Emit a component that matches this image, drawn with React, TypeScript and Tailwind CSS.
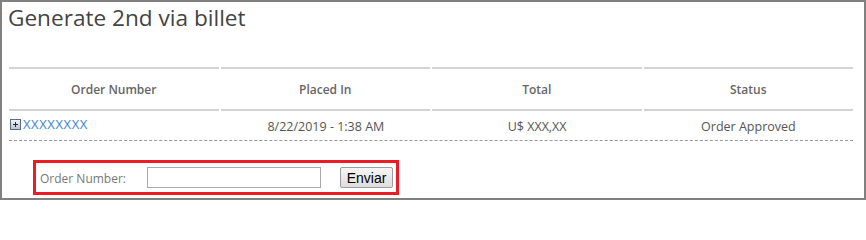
import React from "react";

const columns = ["Order Number", "Placed In", "Total", "Status"];

function PlusBox() {
  return (
    <svg width="11" height="11" viewBox="0 0 11 11" className="shrink-0">
      <defs>
        <linearGradient id="pb" x1="0" y1="0" x2="0" y2="1">
          <stop offset="0" stopColor="#f4f6fa" />
          <stop offset="1" stopColor="#b9c2d0" />
        </linearGradient>
      </defs>
      <rect x="0.5" y="0.5" width="10" height="10" fill="url(#pb)" stroke="#5d6b82" />
      <path d="M3 5.5h5M5.5 3v5" stroke="#1f2a3c" strokeWidth="1" />
    </svg>
  );
}

export default function App() {
  return (
    <div
      className="w-[866px] h-[200px] border-2 border-[#808080] bg-white text-[#444]"
      style={{ fontFamily: '"Open Sans", "Noto Sans", sans-serif' }}
    >
      <h1 className="pl-[6px] pt-[1px] text-[22.6px] leading-[30px] font-normal text-[#444]">
        Generate 2nd via billet
      </h1>

      <div className="ml-[7px] mt-[34px] w-[844px]">
        <div className="flex gap-[2px]">
          {columns.map((c) => (
            <div
              key={c}
              className="flex-1 h-[44px] border-y-2 border-[#d4d4d4] flex items-center justify-center pt-[1px] text-[12px] font-semibold text-[#666]"
            >
              {c}
            </div>
          ))}
        </div>

        <div className="flex gap-[2px] h-[30px] items-center border-b border-dashed border-[#999] text-[12.5px] text-[#555]">
          <div className="flex-1 flex items-center gap-[2px] pl-[1px] pb-[2px]">
            <PlusBox />
            <a href="#" className="text-[#3d85d8] text-[13px] tracking-[0.6px]">XXXXXXXX</a>
          </div>
          <div className="flex-1 text-center pt-[3px]">8/22/2019 - 1:38 AM</div>
          <div className="flex-1 text-center pt-[3px]">U$ XXX,XX</div>
          <div className="flex-1 text-center pt-[3px]">Order Approved</div>
        </div>
      </div>

      <div className="ml-[31px] mt-[19px] w-[366px] h-[35px] border-[3px] border-[#ed1c24] flex items-center pl-[4px]">
        <span className="w-[107px] text-[12px] text-[#777] pt-[2px]">Order Number:</span>
        <input
          type="text"
          className="w-[174px] h-[21px] border border-[#a9a9a9] bg-white outline-none"
        />
        <button
          className="ml-[19px] w-[53px] h-[21px] border border-[#9e9e9e] rounded-[2px] bg-gradient-to-b from-[#f6f6f6] to-[#dedede] text-[14px] text-black leading-none"
          style={{ fontFamily: '"Liberation Sans", Arial, sans-serif' }}
        >
          Enviar
        </button>
      </div>
    </div>
  );
}
